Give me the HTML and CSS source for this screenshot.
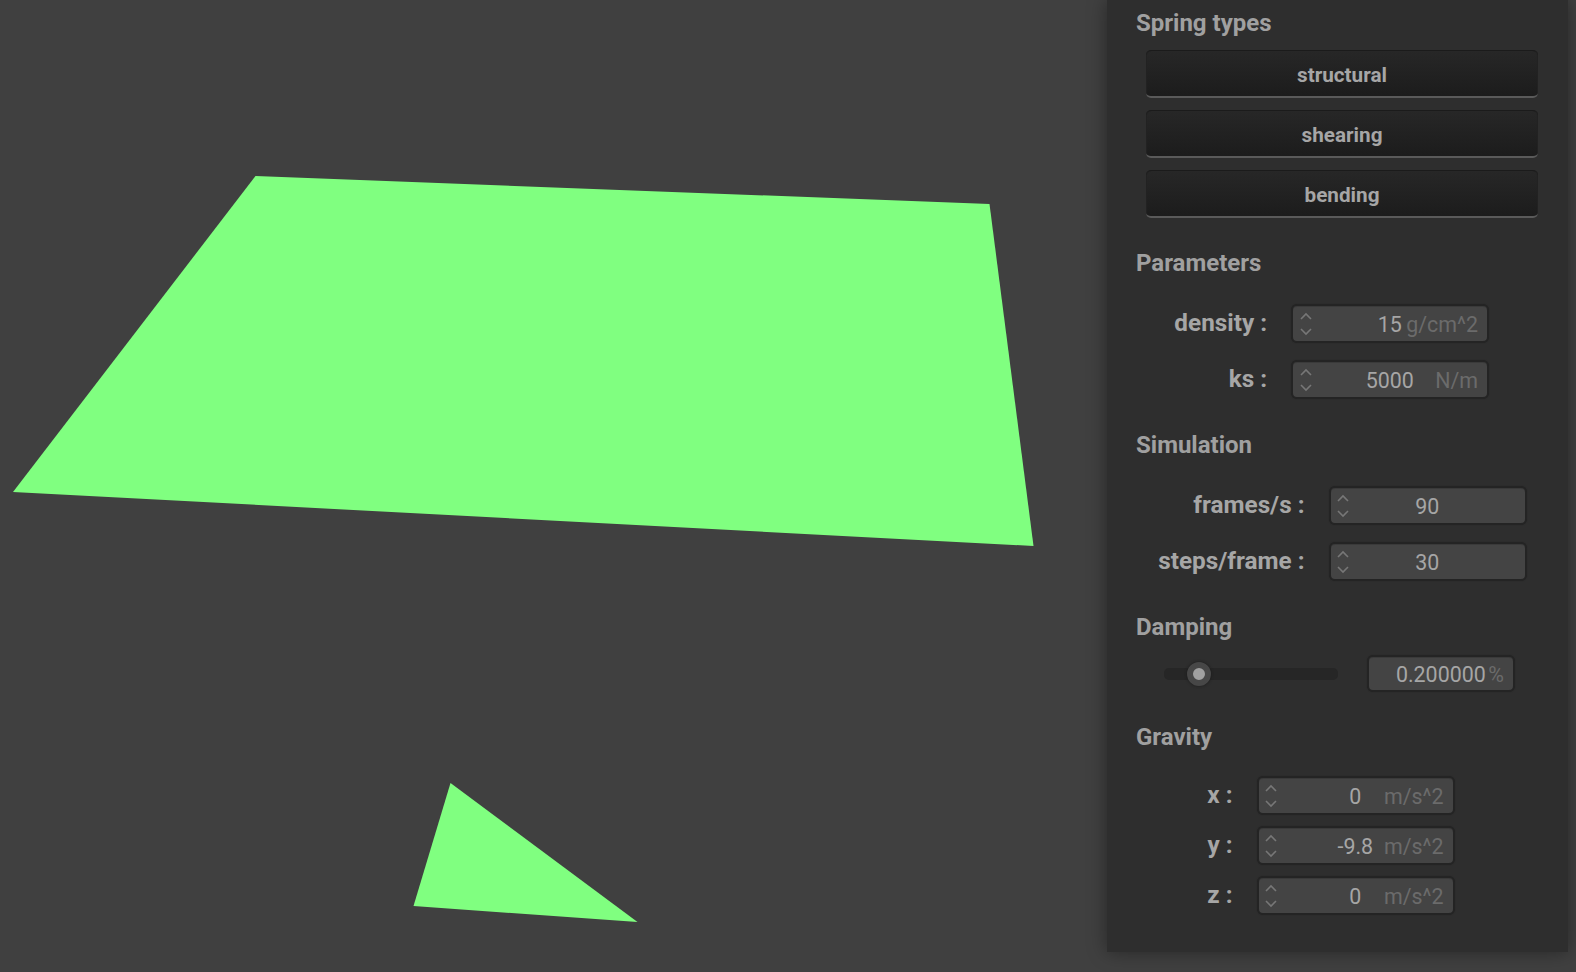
FILE: index.html
```html
<!DOCTYPE html>
<html lang="en">
<head>
  <meta charset="UTF-8">
  <title>Cloth simulation</title>
  <link rel="stylesheet" href="styles.css">
</head>
<body>
  <main class="view">
    <!-- cloth and falling piece -->
    <svg class="scene" width="1107" height="972" viewBox="0 0 1107 972">
      <polygon points="255.5,176 989.5,204 1033.5,546 13,492"></polygon>
      <polygon points="450.5,783 637.5,922 413.5,906"></polygon>
    </svg>
  </main>

  <aside class="panel">
    <section class="group group-springs">
      <h2>Spring types</h2>
      <button class="btn">structural</button>
      <button class="btn">shearing</button>
      <button class="btn">bending</button>
    </section>

    <section class="group group-params">
      <h2>Parameters</h2>
      <div class="row">
        <label>density :</label>
        <div class="spin">
          <svg class="arrows" width="12" height="24" viewBox="0 0 12 24"><path d="M1 7l5-5 5 5M1 17l5 5 5-5"></path></svg>
          <span class="val">15</span>
          <span class="unit">g/cm^2</span>
        </div>
      </div>
      <div class="row">
        <label>ks :</label>
        <div class="spin">
          <svg class="arrows" width="12" height="24" viewBox="0 0 12 24"><path d="M1 7l5-5 5 5M1 17l5 5 5-5"></path></svg>
          <span class="val">5000</span>
          <span class="unit">N/m</span>
        </div>
      </div>
    </section>

    <section class="group group-sim">
      <h2>Simulation</h2>
      <div class="row">
        <label>frames/s :</label>
        <div class="spin">
          <svg class="arrows" width="12" height="24" viewBox="0 0 12 24"><path d="M1 7l5-5 5 5M1 17l5 5 5-5"></path></svg>
          <span class="val">90</span>
        </div>
      </div>
      <div class="row">
        <label>steps/frame :</label>
        <div class="spin">
          <svg class="arrows" width="12" height="24" viewBox="0 0 12 24"><path d="M1 7l5-5 5 5M1 17l5 5 5-5"></path></svg>
          <span class="val">30</span>
        </div>
      </div>
    </section>

    <section class="group group-damping">
      <h2>Damping</h2>
      <div class="damp-row">
        <div class="track"><span class="thumb"></span></div>
        <div class="spin spin-plain">
          <span class="val">0.200000</span>
          <span class="unit">%</span>
        </div>
      </div>
    </section>

    <section class="group group-gravity">
      <h2>Gravity</h2>
      <div class="row">
        <label>x :</label>
        <div class="spin">
          <svg class="arrows" width="12" height="24" viewBox="0 0 12 24"><path d="M1 7l5-5 5 5M1 17l5 5 5-5"></path></svg>
          <span class="val">0</span>
          <span class="unit">m/s^2</span>
        </div>
      </div>
      <div class="row">
        <label>y :</label>
        <div class="spin">
          <svg class="arrows" width="12" height="24" viewBox="0 0 12 24"><path d="M1 7l5-5 5 5M1 17l5 5 5-5"></path></svg>
          <span class="val">-9.8</span>
          <span class="unit">m/s^2</span>
        </div>
      </div>
      <div class="row">
        <label>z :</label>
        <div class="spin">
          <svg class="arrows" width="12" height="24" viewBox="0 0 12 24"><path d="M1 7l5-5 5 5M1 17l5 5 5-5"></path></svg>
          <span class="val">0</span>
          <span class="unit">m/s^2</span>
        </div>
      </div>
    </section>
  </aside>
</body>
</html>
```

FILE: styles.css
```css
* {
  box-sizing: border-box;
}

html, body {
  margin: 0;
  height: 100%;
}

body {
  display: flex;
  width: 1576px;
  height: 972px;
  overflow: hidden;
  background-color: #404040;
  font-family: Roboto, 'Liberation Sans', sans-serif;
  color: #a6a6a6;
}

.view {
  width: 1107px;
  flex: none;
}

.scene {
  display: block;
}

.scene polygon {
  fill: #80ff80;
}

.panel {
  width: 461px;
  height: 952px;
  flex: none;
  padding: 0 0 0 29px;
  background-color: #2e2e2e;
  box-shadow: 0 0 18px rgba(0, 0, 0, 0.4);
}

.group h2 {
  margin: 0;
  height: 26px;
  line-height: 28px;
  font-size: 24px;
  font-weight: 700;
  color: #a0a0a0;
}

.group-springs {
  padding-top: 9px;
}

.group-params {
  margin-top: 31px;
}

.group-sim {
  margin-top: 32px;
}

.group-damping {
  margin-top: 32px;
}

.group-gravity {
  margin-top: 31px;
}

.btn {
  display: block;
  width: 392px;
  height: 48px;
  margin: 0 0 12px 10px;
  padding: 2px 0 0;
  border: 0;
  border-top: 1px solid #1b1b1b;
  border-bottom: 2px solid #5a5a5a;
  border-radius: 5px;
  background: linear-gradient(#272727, #1c1c1c);
  box-shadow: inset 1px 0 #222, inset -1px 0 #222;
  font-family: inherit;
  font-size: 20.7px;
  font-weight: 700;
  color: #a6a6a6;
}

.group-springs .btn:first-of-type {
  margin-top: 15px;
}

.row {
  display: flex;
  align-items: center;
  gap: 25px;
  height: 38px;
}

.row label {
  text-align: right;
  font-size: 24.3px;
  font-weight: 700;
  color: #a6a6a6;
  white-space: nowrap;
  padding-bottom: 3px;
}

.group-params .row {
  margin-bottom: 18px;
}

.group-params h2 + .row {
  margin-top: 30px;
}

.group-params .row label {
  width: 131px;
}

.group-sim .row {
  margin-bottom: 18px;
}

.group-sim h2 + .row {
  margin-top: 30px;
}

.group-sim .row label {
  width: 168.5px;
}

.group-damping h2 + .damp-row {
  margin-top: 16px;
}

.group-gravity .row {
  margin-bottom: 12px;
}

.group-gravity h2 + .row {
  margin-top: 28px;
}

.group-gravity .row label {
  width: 96.5px;
}

.spin {
  display: grid;
  grid-template-columns: 1fr auto 1fr;
  align-items: center;
  flex: none;
  width: 198px;
  height: 39px;
  margin: 0 0 2px -1px;
  padding: 2px 9px 0 6.7px;
  border: 2px solid #242424;
  border-radius: 6px;
  background-color: #444;
  box-shadow: 0 0 1px #242424, inset 0 1px #3a3a3a;
  font-size: 21.4px;
}

.arrows {
  grid-column: 1;
  grid-row: 1;
  justify-self: start;
}

.arrows path {
  fill: none;
  stroke: #777;
  stroke-width: 1.6;
}

.val {
  grid-column: 2;
  grid-row: 1;
  margin-left: 2px;
  color: #a6a6a6;
}

.unit {
  grid-column: 3;
  grid-row: 1;
  justify-self: end;
  color: #6b6b6b;
}

.damp-row {
  display: flex;
  align-items: center;
  gap: 29px;
  padding-left: 28px;
}

.track {
  position: relative;
  width: 174px;
  height: 12px;
  border-radius: 5px;
  background-color: #262626;
}

.thumb {
  position: absolute;
  left: 23px;
  top: -6px;
  width: 24px;
  height: 24px;
  border: 6px solid #474747;
  border-radius: 50%;
  background-color: #a0a0a0;
  box-shadow: 0 0 3px #1a1a1a;
}

.spin-plain {
  width: 148px;
  height: 37px;
  margin: 0;
}
```
